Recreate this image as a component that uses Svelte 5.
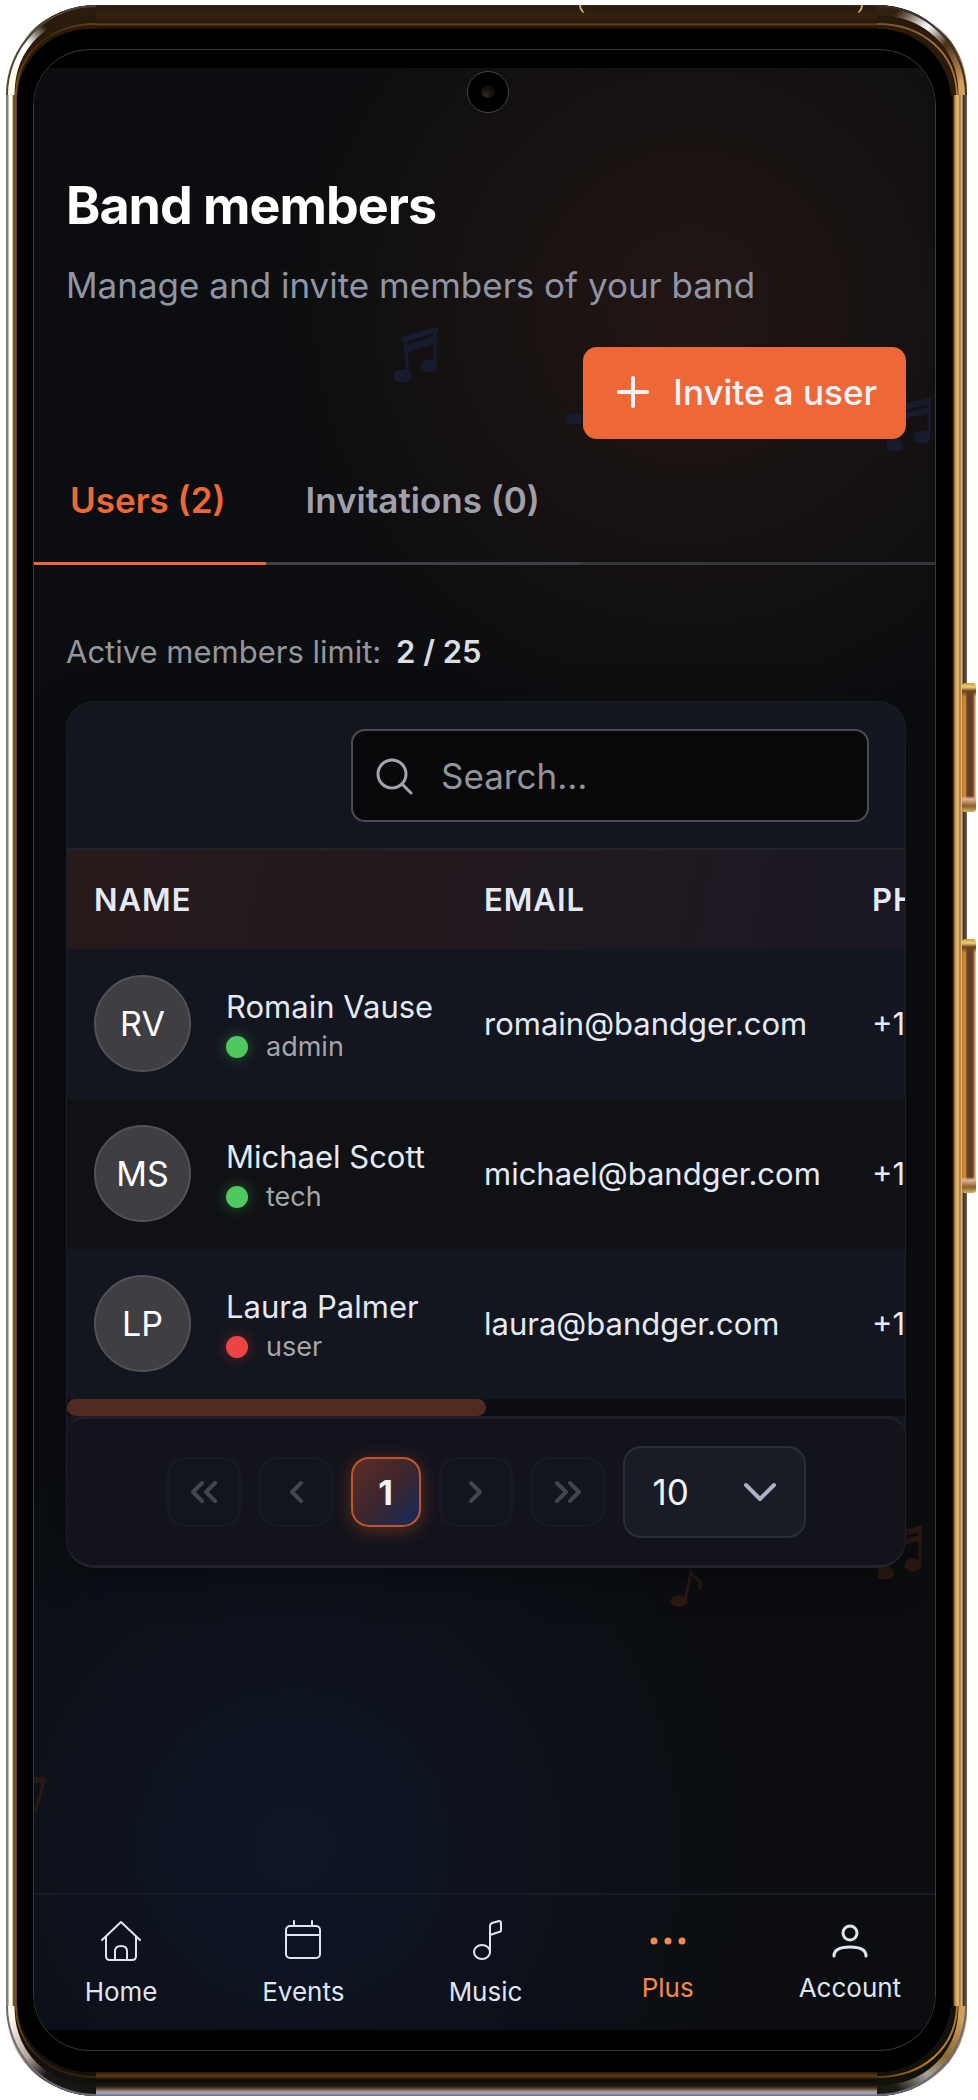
<script>
    let activeTab = "users";
    let search = "";
    let pageSize = 10;

    const tabs = [
        { id: "users", label: "Users (2)" },
        { id: "invitations", label: "Invitations (0)" },
    ];

    const members = [
        { initials: "RV", name: "Romain Vause", role: "admin", active: true, email: "romain@bandger.com", phone: "+1" },
        { initials: "MS", name: "Michael Scott", role: "tech", active: true, email: "michael@bandger.com", phone: "+1" },
        { initials: "LP", name: "Laura Palmer", role: "user", active: false, email: "laura@bandger.com", phone: "+1" },
    ];

    // metal reflections, from the side of the phone round to the top or bottom edge
    const corners = [
        { id: "tl", base: "#2a1a0c", rim: "#4a443a", side: ["#fffbe6", "#ffffff", "#2a1a0c", "#2c1c0e"], line: ["#8c5920", "#3a2208", "#70471f"] },
        { id: "tr", base: "#2a1a0c", rim: "#3a3026", side: ["#d2a058", "#4a3018", "#ffffff", "#33210f"], line: ["#a87038", "#9a6a3a", "#70471f"] },
        { id: "bl", base: "#12110c", rim: "#6c687a", side: ["#fffbe6", "#b8a49c", "#1c1816", "#15150f"], line: ["#8c5920", "#2a1a08", "#3a240e"] },
        { id: "br", base: "#12110c", rim: "#6c687a", side: ["#d2a058", "#8a6a30", "#a8a498", "#1a1a12"], line: ["#a87038", "#c08a1c", "#3a240e"] },
    ];

    $: filtered = members.filter((m) => (m.name + m.email).toLowerCase().includes(search.toLowerCase()));
</script>

<div class="page">
    <div class="phone">
        {#each corners as corner (corner.id)}
            <svg class="corner {corner.id}" viewBox="0 0 90 90">
                <defs>
                    <linearGradient id="side-{corner.id}" gradientUnits="userSpaceOnUse" x1="0" y1="90" x2="90" y2="0">
                        <stop offset="0.1" stop-color={corner.side[0]} />
                        <stop offset="0.4" stop-color={corner.side[1]} />
                        <stop offset="0.6" stop-color={corner.side[2]} />
                        <stop offset="0.85" stop-color={corner.side[3]} />
                    </linearGradient>
                    <linearGradient id="line-{corner.id}" gradientUnits="userSpaceOnUse" x1="0" y1="90" x2="90" y2="0">
                        <stop offset="0" stop-color={corner.line[0]} />
                        <stop offset="0.5" stop-color={corner.line[1]} />
                        <stop offset="1" stop-color={corner.line[2]} />
                    </linearGradient>
                </defs>
                <path d="M90 90V0A90 90 0 0 0 0 90Z" fill={corner.base} />
                <path d="M4 90C4 40 40 6 90 6" stroke="url(#side-{corner.id})" stroke-width="9" />
                <path d="M10 90C11 48 44 19 90 19" stroke="url(#line-{corner.id})" stroke-width="2" />
                <path d="M1 90A89 89 0 0 1 90 1" stroke={corner.rim} stroke-width="2" />
            </svg>
        {/each}
        <span class="side-button volume"></span>
        <span class="side-button power"></span>
        <span class="speaker"></span>
        <div class="bezel">
            <div class="screen">
                <span class="camera"><i></i></span>
                <main class="app">
                    <svg class="note blue n1" viewBox="0 0 44 54"><path d="M11 10 41 1v34M11 10l3 37M12 23l29-9" /><path class="beam" d="M11 11 41 2M12 20l29-9" /><ellipse cx="8" cy="48" rx="8" ry="5" /><ellipse cx="35" cy="38" rx="7" ry="5" /></svg>
                    <svg class="note blue n2" viewBox="0 0 44 54"><ellipse cx="8" cy="48" rx="8" ry="4" /></svg>
                    <svg class="note blue n3" viewBox="0 0 44 54"><path d="M10 9 42 2v34M10 9v38" /><path class="beam" d="M10 11 42 3M10 20l32-8" /><ellipse cx="7" cy="47" rx="8" ry="5" /><ellipse cx="35" cy="39" rx="7" ry="5" /></svg>
                    <svg class="note orange n4" viewBox="0 0 44 54"><path d="M10 9 42 2v34M10 9v38" /><path class="beam" d="M10 11 42 3M10 20l32-8" /><ellipse cx="7" cy="47" rx="8" ry="5" /><ellipse cx="35" cy="39" rx="7" ry="5" /></svg>
                    <svg class="note orange n5" viewBox="0 0 44 54"><path d="M17 43 23 14c1 7 12 6 9 16" /><ellipse cx="11" cy="43" rx="7" ry="4" /></svg>
                    <svg class="note orange n6" viewBox="0 0 44 54"><path d="M10 5h32l-8 32" /><path class="beam" d="M10 6h31" /></svg>

                    <header class="page-header">
                        <h1>Band members</h1>
                        <p>Manage and invite members of your band</p>
                        <button class="invite-btn">
                            <svg width="32" height="32" viewBox="0 0 32 32"><path d="M16 2v28M2 16h28" /></svg>
                            Invite a user
                        </button>
                    </header>

                    <div class="tabs" role="tablist">
                        {#each tabs as tab (tab.id)}
                            <button role="tab" class="tab" class:active={activeTab === tab.id} aria-selected={activeTab === tab.id} on:click={() => (activeTab = tab.id)}>
                                {tab.label}
                            </button>
                        {/each}
                    </div>

                    <section class="content">
                        <p class="limit">Active members limit: <strong>2 / 25</strong></p>

                        <div class="card">
                            <div class="toolbar">
                                <label class="search">
                                    <svg width="38" height="38" viewBox="0 0 38 38"><circle cx="17" cy="17" r="14" /><path d="m27 27 9 9" /></svg>
                                    <input type="text" placeholder="Search..." aria-label="Search" bind:value={search} />
                                </label>
                            </div>

                            <div class="table-wrap">
                                <table>
                                    <thead>
                                        <tr>
                                            <th class="col-name">Name</th>
                                            <th class="col-email">Email</th>
                                            <th>Phone</th>
                                        </tr>
                                    </thead>
                                    <tbody>
                                        {#each filtered as member (member.email)}
                                            <tr>
                                                <td>
                                                    <div class="member">
                                                        <span class="avatar">{member.initials}</span>
                                                        <div class="identity">
                                                            <div class="name">{member.name}</div>
                                                            <div class="role"><span class="dot" class:off={!member.active}></span>{member.role}</div>
                                                        </div>
                                                    </div>
                                                </td>
                                                <td>{member.email}</td>
                                                <td>{member.phone}</td>
                                            </tr>
                                        {/each}
                                    </tbody>
                                </table>
                            </div>
                            <div class="scrollbar"><span></span></div>

                            <div class="pagination">
                                <button class="page-btn" disabled aria-label="First page">
                                    <svg width="28" height="24" viewBox="0 0 28 24"><path d="M12 3 3 12l9 9M25 3l-9 9 9 9" /></svg>
                                </button>
                                <button class="page-btn" disabled aria-label="Previous page">
                                    <svg width="28" height="24" viewBox="0 0 28 24"><path d="m19 3-9 9 9 9" /></svg>
                                </button>
                                <button class="page-btn current">1</button>
                                <button class="page-btn" disabled aria-label="Next page">
                                    <svg width="28" height="24" viewBox="0 0 28 24"><path d="m9 3 9 9-9 9" /></svg>
                                </button>
                                <button class="page-btn" disabled aria-label="Last page">
                                    <svg width="28" height="24" viewBox="0 0 28 24"><path d="m3 3 9 9-9 9M16 3l9 9-9 9" /></svg>
                                </button>
                                <div class="page-size">
                                    <select aria-label="Rows per page" bind:value={pageSize}>
                                        <option value={10}>10</option>
                                    </select>
                                    <svg width="34" height="20" viewBox="0 0 34 20"><path d="m3 3 14 14L31 3" /></svg>
                                </div>
                            </div>
                        </div>
                    </section>

                    <nav>
                        <a href="#home">
                            <svg width="42" height="42" viewBox="0 0 42 42"><path d="M2 20 21 2l19 18M6 17v19q0 4 4 4h22q4 0 4-4V17M15 40V31q0-5 6-5t6 5v9" /></svg>
                            Home
                        </a>
                        <a href="#events">
                            <svg width="42" height="42" viewBox="0 0 42 42"><rect x="4" y="6" width="34" height="32" rx="4" /><path d="M4 15h34M12 6V1M30 6V1" /></svg>
                            Events
                        </a>
                        <a href="#music">
                            <svg width="42" height="42" viewBox="0 0 42 42"><ellipse cx="18" cy="32" rx="8" ry="7" /><path d="M26 32V6q0-2 2-3l7-2q2 0 2 2v7q0 2-2 2l-9 3" /></svg>
                            Music
                        </a>
                        <a href="#plus" class="active">
                            <svg width="42" height="38" viewBox="0 0 42 38"><circle cx="7" cy="21" r="3.5" /><circle cx="21" cy="21" r="3.5" /><circle cx="35" cy="21" r="3.5" /></svg>
                            Plus
                        </a>
                        <a href="#account">
                            <svg class="bold" width="42" height="38" viewBox="0 0 42 38"><circle cx="21" cy="13" r="7" /><path d="M5 36q0-9 16-9t16 9" /></svg>
                            Account
                        </a>
                    </nav>
                </main>
            </div>
        </div>
    </div>
</div>

<style>
    :global(body) {
        background: #fff;
    }
    .page {
        display: flex;
        box-sizing: border-box;
        min-height: 100vh;
        padding: 5px 11px 4px 6px;
        font-family: Inter, sans-serif;
        color: #edf2fb;
    }
    .page :global(*) {
        box-sizing: border-box;
    }
    .phone {
        position: relative;
        display: flex;
        flex: 1;
        min-width: 0;
        padding: 24px 16px 24px 11px;
        border-radius: 90px;
        background:
            linear-gradient(#33302c 0, #2a1b0d 2px, #33210f 10px, #291a0b 18px, #70471f 19px, #2c1a09 21px, #150c04 24px) 50% 0 / calc(100% - 178px) 24px no-repeat,
            linear-gradient(#2a1705 0, #5e3b16 4px, #0c0a06 8px, #1a1a12 14px, #6b4a24 17px, #8e8c9e 19px, #a9a6c2 21px, #6e6a72 24px) 50% 100% / calc(100% - 178px) 24px no-repeat,
            linear-gradient(90deg, #888 0, #7c776c 2px, #fffef2 3px, #fffbe6 6px, #8a8270 7px, #5e3a12 8px, #8c5920 10px, #3a2208 11px, #000 12px, #000 calc(100% - 16px), #1e0f04 calc(100% - 14px), #c68f48 calc(100% - 12px), #e8c07c calc(100% - 9px), #a87038 calc(100% - 7px), #ecd09a calc(100% - 5px), #3a3020 calc(100% - 4px), #6e6352 100%);
    }
    .corner {
        position: absolute;
        width: 90px;
        height: 90px;
        stroke-linecap: butt;
        stroke: none;
    }
    .tl {
        top: 0;
        left: 0;
    }
    .tr {
        top: 0;
        right: 0;
        transform: scaleX(-1);
    }
    .bl {
        bottom: 0;
        left: 0;
        transform: scaleY(-1);
    }
    .br {
        right: 0;
        bottom: 0;
        transform: scale(-1);
    }
    .side-button {
        position: absolute;
        right: -9px;
        width: 14px;
        border-radius: 3px;
        background: linear-gradient(#c8992e, #f0d27a 4px, #6b4413 8px, transparent 14px, transparent calc(100% - 16px), #e4b694 calc(100% - 13px), #8d5c2c calc(100% - 6px), #cdb765 100%), linear-gradient(90deg, #b87420, #d8943a 3px, #6b4230 5px, #5c3a26 10px, #a86a2c 12px, #f2dcb0);
    }
    .volume {
        top: 678px;
        height: 129px;
    }
    .power {
        top: 934px;
        height: 254px;
    }
    .speaker {
        position: absolute;
        top: 0;
        left: 60%;
        width: 284px;
        height: 10px;
        margin-left: -4px;
        border: solid #d8a878;
        border-width: 0 2px 1px;
        border-bottom-color: #2c1d10;
        border-radius: 0 0 20px 20px;
    }
    .bezel {
        position: relative;
        display: flex;
        flex: 1;
        min-width: 0;
        padding: 20px 15px 21px 16px;
        border-radius: 72px;
        background: #000;
    }
    .screen {
        position: relative;
        display: flex;
        flex: 1;
        min-width: 0;
        padding: 18px 0 20px;
        border: 1px solid #393939;
        border-radius: 56px;
        background: #000;
        overflow: hidden;
    }
    .camera {
        position: absolute;
        z-index: 2;
        top: 21px;
        left: 50%;
        width: 42px;
        height: 42px;
        margin-left: -18px;
        border: 1px solid #444;
        border-radius: 50%;
        background: #000;
    }
    .camera i {
        position: absolute;
        top: 13px;
        left: 13px;
        width: 14px;
        height: 13px;
        border-radius: 50%;
        background: radial-gradient(circle at 35% 75%, #2b2b2b, #1c1408 40%, #060504);
    }
    .app {
        position: relative;
        display: flex;
        flex: 1;
        flex-direction: column;
        min-width: 0;
        background:
            radial-gradient(circle at 656px 240px, rgba(236, 100, 50, 0.1), transparent 440px),
            radial-gradient(circle at 260px 1780px, rgba(40, 90, 220, 0.11), transparent 460px),
            #0b0d10;
    }
    .note {
        position: absolute;
        width: 44px;
        height: 54px;
        fill: none;
        stroke-width: 3;
    }
    .note .beam {
        stroke-width: 6;
    }
    .blue {
        color: #171b2d;
    }
    .orange {
        color: #2b1813;
    }
    .note path {
        stroke: currentColor;
    }
    .note ellipse {
        fill: currentColor;
    }
    .n1 {
        top: 260px;
        left: 360px;
    }
    .n2 {
        top: 303px;
        left: 532px;
    }
    .n3 {
        top: 330px;
        left: 853px;
    }
    .n4 {
        top: 1458px;
        left: 844px;
    }
    .n5 {
        top: 1490px;
        left: 634px;
    }
    .n6 {
        top: 1706px;
        left: -32px;
    }
    .page-header {
        display: flex;
        flex-direction: column;
        padding: 105px 29px 0 32px;
    }
    h1 {
        margin: 0;
        font-size: 52px;
        line-height: 66px;
        font-weight: 700;
        letter-spacing: -1px;
        color: #fff;
    }
    .page-header p {
        margin: 24px 0 40px;
        font-size: 35px;
        line-height: 44px;
        color: #8f95a5;
    }
    button,
    input,
    select {
        font-family: inherit;
        color: inherit;
    }
    svg {
        fill: none;
        stroke: currentColor;
        stroke-linecap: round;
        stroke-linejoin: round;
    }
    .invite-btn {
        position: relative;
        display: flex;
        align-items: center;
        align-self: flex-end;
        gap: 24px;
        height: 92px;
        padding: 0 29px 2px 34px;
        border: none;
        border-radius: 14px;
        background: #ee6837;
        font-size: 35px;
        font-weight: 500;
        cursor: pointer;
    }
    .invite-btn svg {
        stroke-width: 4;
    }
    .tabs {
        position: relative;
        display: flex;
        margin-left: -4px;
        border-bottom: 3px solid #35363b;
    }
    .tab {
        margin-bottom: -3px;
        padding: 39px 40px 40px;
        border: none;
        border-bottom: 3px solid #3f4046;
        background: none;
        font-size: 35px;
        line-height: 44px;
        font-weight: 600;
        color: #a0a0aa;
        cursor: pointer;
    }
    .tab.active {
        border-bottom-color: #ee6837;
        color: #ee6837;
    }
    .content {
        position: relative;
        padding: 67px 29px 60px 32px;
    }
    .limit {
        margin: 0 0 29px;
        font-size: 31px;
        line-height: 40px;
        color: #93969b;
    }
    .limit strong {
        margin-left: 6px;
        font-weight: 600;
        color: #dcdfe2;
    }
    .card {
        border: 1px solid #1e2026;
        border-bottom: 3px solid #222328;
        border-radius: 28px;
        background: #13161e;
        box-shadow: 0 8px 40px rgba(0, 0, 0, 0.35);
        overflow: hidden;
    }
    .toolbar {
        display: flex;
        justify-content: flex-end;
        padding: 27px 36px 26px;
        border-bottom: 2px solid #222429;
    }
    .search {
        display: flex;
        align-items: center;
        gap: 28px;
        width: 518px;
        max-width: 100%;
        height: 93px;
        padding: 0 22px;
        border: 2px solid #4b4b51;
        border-radius: 14px;
        background: #08080a;
        color: #a3a3ab;
    }
    .search svg {
        flex: none;
        stroke-width: 3;
    }
    .search input {
        flex: 1;
        min-width: 0;
        padding: 0;
        border: none;
        outline: none;
        background: none;
        font-size: 35px;
    }
    .search input::placeholder {
        color: #93939b;
        opacity: 1;
    }
    .table-wrap {
        overflow: hidden;
    }
    table {
        width: 1680px;
        table-layout: fixed;
        border-collapse: collapse;
        background: #13161e;
        font-size: 31px;
        color: #e4eaf5;
    }
    thead {
        background: linear-gradient(100deg, #271a1b, #1b1823 50%, #201822);
    }
    th {
        height: 99px;
        padding: 0 27px;
        text-align: left;
        text-transform: uppercase;
        letter-spacing: 1px;
        font-weight: 600;
    }
    .col-name {
        width: 390px;
    }
    .col-email {
        width: 388px;
    }
    td {
        height: 150px;
        padding: 0 27px 1px;
        white-space: nowrap;
    }
    tbody tr:nth-child(even) {
        background: #101115;
    }
    .member {
        display: flex;
        align-items: center;
        gap: 35px;
    }
    .avatar {
        display: flex;
        flex: none;
        align-items: center;
        justify-content: center;
        width: 97px;
        height: 97px;
        border: 2px solid #515156;
        border-radius: 50%;
        background: #3e3e43;
        font-size: 34px;
        color: #fff;
    }
    .identity {
        padding-top: 7px;
    }
    .name {
        line-height: 40px;
    }
    .role {
        display: flex;
        align-items: center;
        gap: 18px;
        font-size: 27px;
        line-height: 40px;
        color: #a4a6aa;
    }
    .dot {
        width: 22px;
        height: 22px;
        border-radius: 50%;
        background: #50c860;
        box-shadow: 0 0 14px rgba(80, 200, 96, 0.4);
    }
    .dot.off {
        background: #ea4444;
        box-shadow: 0 0 14px rgba(234, 68, 68, 0.4);
    }
    .scrollbar {
        height: 17px;
        background: #0d0e13;
    }
    .scrollbar span {
        display: block;
        width: 50%;
        height: 17px;
        border-radius: 9px;
        background: #522a22;
    }
    .pagination {
        display: flex;
        align-items: center;
        justify-content: center;
        gap: 18px;
        height: 149px;
        border-top: 3px solid #1e2026;
        border-radius: 18px 18px 0 0;
        background: #13131b;
    }
    .page-btn {
        display: flex;
        align-items: center;
        justify-content: center;
        width: 74px;
        height: 70px;
        padding: 0;
        border: 2px solid #181a21;
        border-radius: 18px;
        background: #12151c;
        color: #43444e;
    }
    .page-btn svg {
        stroke-width: 4;
    }
    .page-btn.current {
        width: 70px;
        border-color: #bf5530;
        background: linear-gradient(135deg, #5e2c22, #3a2630 55%, #142a5c);
        box-shadow: 0 3px 18px rgba(236, 100, 50, 0.35);
        font-size: 34px;
        font-weight: 700;
        color: #edf2fb;
    }
    .page-size {
        position: relative;
        display: flex;
        align-items: center;
    }
    .page-size select {
        width: 183px;
        height: 92px;
        padding: 0 28px;
        border: 2px solid #2a2d35;
        border-radius: 18px;
        background: #191c24;
        appearance: none;
        font-size: 35px;
    }
    .page-size svg {
        position: absolute;
        right: 29px;
        stroke-width: 4;
        color: #a9b2c6;
        pointer-events: none;
    }
    nav {
        position: relative;
        display: grid;
        grid-template-columns: repeat(5, 1fr);
        align-items: start;
        height: 137px;
        margin: auto -6px 0 -4px;
        border-top: 2px solid #171b24;
    }
    nav a {
        display: flex;
        flex-direction: column;
        align-items: center;
        gap: 13px;
        padding-top: 25px;
        font-size: 26px;
        line-height: 34px;
        color: #dfe5f0;
        text-decoration: none;
    }
    nav svg {
        stroke-width: 2;
    }
    nav svg.bold {
        stroke-width: 3;
    }
    nav a.active {
        color: #f2894e;
    }
    nav a.active svg {
        fill: currentColor;
        stroke: none;
    }
</style>
